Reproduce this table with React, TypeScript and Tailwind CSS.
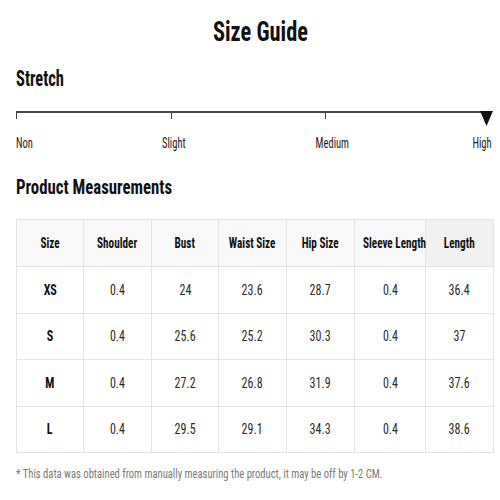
import React from 'react'

const font = { fontFamily: 'Roboto, "Liberation Sans", sans-serif' }

const columns = [
  { label: 'Size', w: 'w-[67px]' },
  { label: 'Shoulder', w: 'w-[68px]' },
  { label: 'Bust', w: 'w-[67px]' },
  { label: 'Waist Size', w: 'w-[68px]' },
  { label: 'Hip Size', w: 'w-[68px]' },
  { label: 'Sleeve Length', w: 'w-[71px]' },
  { label: 'Length', w: 'w-[68px]' },
]

const rows = [
  ['XS', '0.4', '24', '23.6', '28.7', '0.4', '36.4'],
  ['S', '0.4', '25.6', '25.2', '30.3', '0.4', '37'],
  ['M', '0.4', '27.2', '26.8', '31.9', '0.4', '37.6'],
  ['L', '0.4', '29.5', '29.1', '34.3', '0.4', '38.6'],
]

const stretchLevels = ['Non', 'Slight', 'Medium', 'High']

export default function App() {
  return (
    <div className="w-[500px] h-[500px] bg-white text-[#111] font-stretch-condensed overflow-hidden" style={font}>
      {/* Title */}
      <h1 className="pt-[18px] pl-[20px] text-center text-[28px] font-bold leading-none">
        <span className="inline-block scale-x-80">Size Guide</span>
      </h1>

      {/* Stretch */}
      <div className="pl-4 pr-[10px] pt-[22px]">
        <h2 className="text-[22px] font-bold leading-none">
          <span className="inline-block scale-x-75 origin-left">Stretch</span>
        </h2>
        <div className="mt-[21px] border-t-2 border-[#444] flex justify-between items-start h-[15px]">
          <div className="w-px h-[6px] bg-[#444]" />
          <div className="w-px h-[6px] bg-[#444]" />
          <div className="w-px h-[6px] bg-[#444]" />
          <svg className="-mt-[2px] -mr-[3px]" width="13" height="15" viewBox="0 0 13 15">
            <polygon points="0,0 13,0 6.5,15" fill="#111" />
          </svg>
        </div>
        <div className="mt-[10px] flex justify-between text-[14px] leading-none text-[#222]">
          {stretchLevels.map((l, i) => (
            <div
              key={l}
              className={`w-0 flex whitespace-nowrap ${i === 0 ? 'justify-start' : i === 3 ? 'justify-end' : 'justify-center'}`}
            >
              <span
                className={`inline-block scale-x-75 ${i === 0 ? 'origin-left' : i === 3 ? 'origin-right -mr-[2px]' : ''}`}
              >
                {l}
              </span>
            </div>
          ))}
        </div>
      </div>

      {/* Product Measurements */}
      <div className="px-4 pt-[27px]">
        <h2 className="text-[21px] font-bold leading-none">
          <span className="inline-block scale-x-80 origin-left">Product Measurements</span>
        </h2>
        <table className="mt-[21px] border-collapse table-fixed w-[477px]">
          <thead>
            <tr className="h-[47px]">
              {columns.map((c, i) => (
                <th
                  key={c.label}
                  className={`${c.w} border border-[#e4e4e4] p-0 text-[14px] font-bold text-center whitespace-nowrap ${i === 6 ? 'bg-[#f1f1f1]' : 'bg-[#f9f9f9]'}`}
                >
                  <span className="inline-block scale-x-80">{c.label}</span>
                </th>
              ))}
            </tr>
          </thead>
          <tbody>
            {rows.map((r) => (
              <tr key={r[0]} className="h-[46.5px]">
                {r.map((v, i) => (
                  <td
                    key={i}
                    className={`border border-[#e4e4e4] p-0 text-center text-[15px] ${i === 0 ? 'font-bold' : 'text-[#2a2a2a]'}`}
                  >
                    <span className="inline-block scale-x-80">{v}</span>
                  </td>
                ))}
              </tr>
            ))}
          </tbody>
        </table>
        <p className="mt-[14px] text-[13px] text-[#7a7a7a] leading-none whitespace-nowrap">
          <span className="inline-block scale-x-[0.815] origin-left">
            * This data was obtained from manually measuring the product, it may be off by 1-2 CM.
          </span>
        </p>
      </div>
    </div>
  )
}
